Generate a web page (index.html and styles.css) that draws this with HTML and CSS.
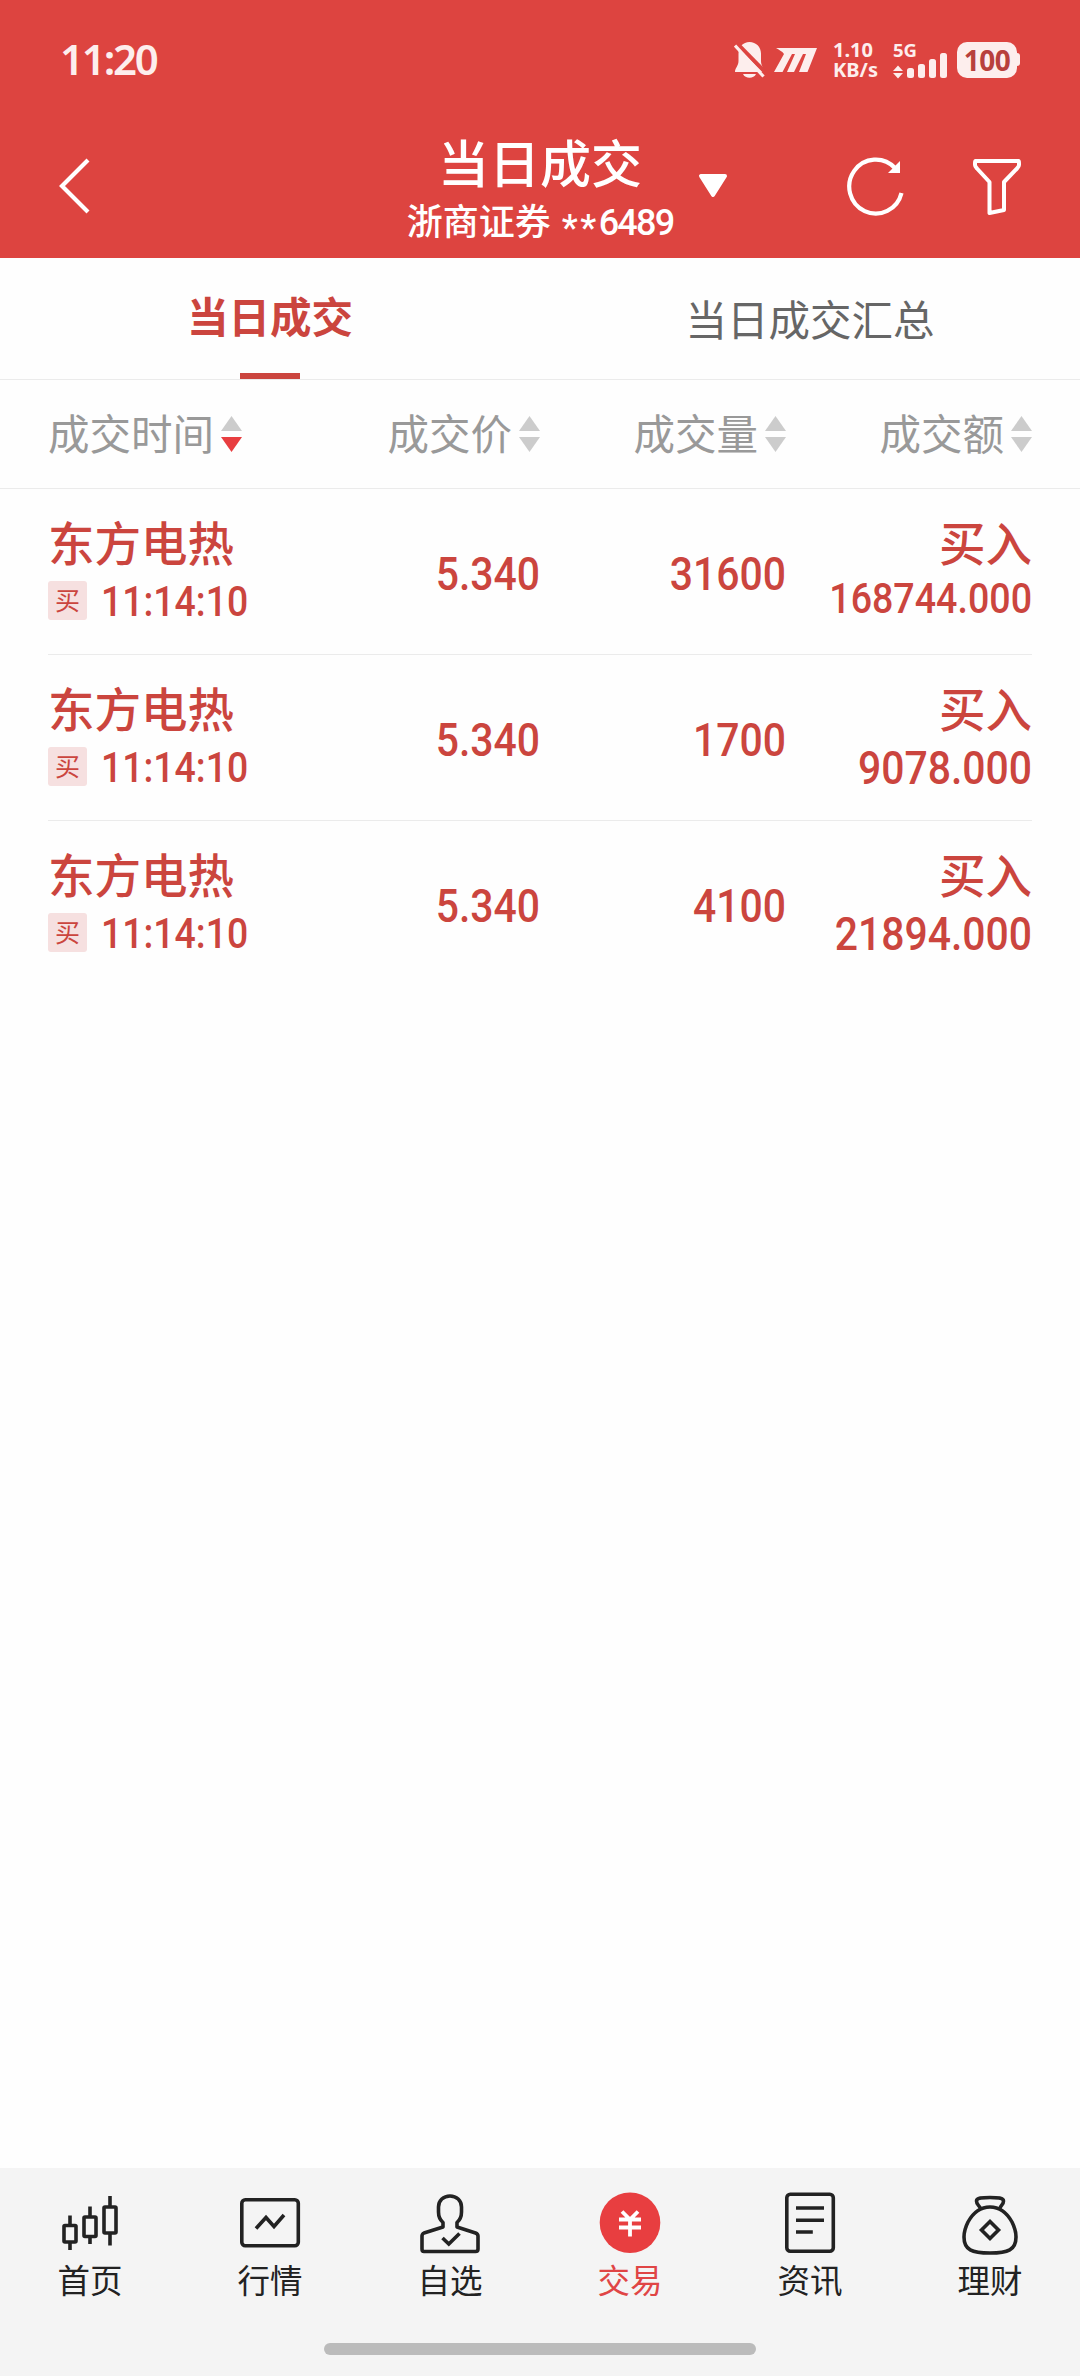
FILE: index.html
```html
<!DOCTYPE html>
<html lang="zh-CN">

<head>
    <meta charset="UTF-8">
    <meta name="viewport" content="width=device-width, initial-scale=1.0">
    <title>当日成交</title>
    <link rel="stylesheet" href="styles.css">
</head>

<body>
    <header class="header">
        <div class="status">
            <div class="clock">11:20</div>
            <div class="status-icons">
                <svg class="bell" width="32" height="38" viewBox="0 0 32 38">
                    <path d="M15.500 1C9 1 4.500 6 4.500 12.500V20C4.500 25 1 27 1 31H30C30 27 27 25 27 20V12.500C27 6 22 1 15.500 1Z" fill="#fdeeed"/>
                    <path d="M9 33H22C20 38 11 38 9 33Z" fill="#fdeeed"/>
                    <path d="M3.500 3L33 33" stroke="#dd4440" stroke-width="4"/>
                    <path d="M1 4.500L29.500 35.500" stroke="#fdeeed" stroke-width="3.200"/>
                </svg>
                <svg class="mlogo" width="44" height="26" viewBox="0 0 44 26">
                    <path d="M2 1H43L33.500 25H25L32 7H29L20 25H13L21 7H18L8.500 25H0L10 7C8 4 5 3 2 1Z" fill="#fdeeed"/>
                </svg>
                <div class="speed"><span>1.10</span><span>KB/s</span></div>
                <div class="signal">
                    <span class="net">5G</span>
                    <svg width="56" height="26" viewBox="0 0 56 26" fill="#fdeeed">
                        <path d="M0 18L5 12.500L10 18ZM0 20H10L5 25.500Z"/>
                        <rect x="14" y="15" width="7" height="10" rx="2.500"/>
                        <rect x="25" y="11" width="7" height="14" rx="2.500"/>
                        <rect x="36" y="6" width="7" height="19" rx="2.500"/>
                        <rect x="47" y="0" width="7" height="25" rx="2.500"/>
                    </svg>
                </div>
                <div class="battery">100</div>
                <div class="battery-tip"></div>
            </div>
        </div>
        <div class="navbar">
            <svg class="back" width="34" height="60" viewBox="0 0 34 60">
                <path d="M31 4L5 30L31 56" fill="none" stroke="#fff" stroke-width="4.200"/>
            </svg>
            <div class="heading">
                <h1>当日成交</h1>
                <p>浙商证券 <span class="stars">**</span><span class="acct">6489</span></p>
            </div>
            <svg class="caret" width="32" height="26" viewBox="0 0 32 26">
                <path d="M4 3H28L16 22Z" fill="#fff" stroke="#fff" stroke-width="4" stroke-linejoin="round"/>
            </svg>
            <svg class="refresh" width="60" height="62" viewBox="0 0 60 62">
                <path d="M55.500 38A26.500 27 0 1 1 49 13" fill="none" stroke="#fff" stroke-width="4.200"/>
                <path d="M54 6V18H42Z" fill="#fff"/>
            </svg>
            <svg class="filter" width="52" height="58" viewBox="0 0 52 58">
                <path d="M4.500 4H47.500Q48 4 48 6V8Q48 9.500 46 11.500L33 25V53L18.500 56V25L6 11.500Q4 9.500 4 8V6Q4 4 4.500 4Z" fill="none" stroke="#fff" stroke-width="4" stroke-linejoin="round"/>
            </svg>
        </div>
    </header>

    <div class="tabs">
        <div class="tab active">当日成交</div>
        <div class="tab">当日成交汇总</div>
    </div>

    <div class="row thead">
        <div class="th first">成交时间<i class="sort desc"></i></div>
        <div class="th">成交价<i class="sort"></i></div>
        <div class="th">成交量<i class="sort"></i></div>
        <div class="th">成交额<i class="sort"></i></div>
    </div>

    <main class="list">
        <div class="row deal">
            <div class="stock">
                <div class="name">东方电热</div>
                <div class="time"><span class="tag">买</span><span class="num small">11:14:10</span></div>
            </div>
            <div class="num">5.340</div>
            <div class="num">31600</div>
            <div class="amount">
                <div class="name">买入</div>
                <div class="num fit">168744.000</div>
            </div>
        </div>
        <div class="row deal">
            <div class="stock">
                <div class="name">东方电热</div>
                <div class="time"><span class="tag">买</span><span class="num small">11:14:10</span></div>
            </div>
            <div class="num">5.340</div>
            <div class="num">1700</div>
            <div class="amount">
                <div class="name">买入</div>
                <div class="num">9078.000</div>
            </div>
        </div>
        <div class="row deal">
            <div class="stock">
                <div class="name">东方电热</div>
                <div class="time"><span class="tag">买</span><span class="num small">11:14:10</span></div>
            </div>
            <div class="num">5.340</div>
            <div class="num">4100</div>
            <div class="amount">
                <div class="name">买入</div>
                <div class="num">21894.000</div>
            </div>
        </div>
    </main>

    <footer class="footer">
        <nav class="tabbar">
            <div class="item">
                <svg class="icon" viewBox="0 0 72 66">
                    <rect x="10" y="35.500" width="12" height="16.500" rx="1"/>
                    <rect x="30" y="27" width="12" height="19.500" rx="1"/>
                    <rect x="50" y="17" width="12" height="26" rx="1"/>
                    <path d="M16 25.500V35M16 53V60M36 16.500V26M36 48V54M56 6V16M56 44V55.500"/>
                </svg>
                <span>首页</span>
            </div>
            <div class="item">
                <svg class="icon" viewBox="0 0 72 66">
                    <rect x="7.800" y="9.800" width="56.500" height="46" rx="3.500"/>
                    <path d="M22 38.500L32 27.500L40 36.500L50 25"/>
                </svg>
                <span>行情</span>
            </div>
            <div class="item">
                <svg class="icon" viewBox="0 0 72 66">
                    <path d="M29 37V32.500C25.500 29.500 24.500 27 24.500 22V17C24.500 10.500 29.500 6 36 6S47.500 10.500 47.500 17V22C47.500 27 46.500 29.500 43 32.500V37L61.500 43Q64 44 64 46V59Q64 61.500 61.500 61.500H10Q8 61.500 8 59V46Q8 44 10 43Z" stroke-linejoin="round"/>
                    <path d="M28.500 48L34.800 54L45.500 43.500"/>
                </svg>
                <span>自选</span>
            </div>
            <div class="item active">
                <svg class="icon" viewBox="0 0 72 66">
                    <circle cx="36" cy="32.700" r="30.300" fill="#e83e40" stroke="none"/>
                    <path d="M28 21.500L36 29.500L44 21.500M25 29.500H47M25 37.500H47M36 29V46.500" stroke="#fff" stroke-width="3.800"/>
                </svg>
                <span>交易</span>
            </div>
            <div class="item">
                <svg class="icon" viewBox="0 0 72 66">
                    <rect x="12.800" y="4.200" width="46.500" height="57" rx="3.500"/>
                    <path d="M22 18H50M22 30.300H50M22 42H38.800"/>
                </svg>
                <span>资讯</span>
            </div>
            <div class="item">
                <svg class="icon" viewBox="0 0 72 66">
                    <path d="M36 17C46 17 53 23 58 32C61 38 62 43 62 47C62 60 54 63 36 63S10 60 10 47C10 43 11 38 14 32C19 23 26 17 36 17Z"/>
                    <path d="M27 19.500C25.500 15 22.500 15 22.500 11C22.500 8 28 7.500 36 7.500S49.500 8 49.500 11C49.500 15 46.500 15 45.500 19.500"/>
                    <path d="M36 31.500L44.500 40L36 48.500L27.500 40Z"/>
                </svg>
                <span>理财</span>
            </div>
        </nav>
        <div class="home-bar"></div>
    </footer>
</body>

</html>
```

FILE: styles.css
```css
* {
    margin: 0;
    padding: 0;
    box-sizing: border-box;
}

body {
    display: flex;
    flex-direction: column;
    height: 2376px;
    background: #fefefe;
    font-family: 'Noto Sans CJK SC', sans-serif;
}

svg {
    display: block;
    flex: none;
}

/* Red header */
.header {
    height: 258px;
    background: #dd4440;
    color: #fff;
}

.status {
    display: flex;
    justify-content: space-between;
    height: 120px;
    padding: 0 60px;
    color: #fdeeed;
    font-family: 'Noto Sans', sans-serif;
    font-weight: 700;
}

.clock {
    padding-top: 29px;
    font-size: 42px;
    font-weight: 600;
    line-height: 60px;
    letter-spacing: -2.2px;
}

.status-icons {
    display: flex;
    align-items: flex-start;
    padding-top: 41px;
}

.mlogo {
    margin: 6px 15px 0 8px;
}

.speed {
    display: flex;
    flex-direction: column;
    width: 60px;
    margin-top: -1px;
    font-size: 20px;
    line-height: 20px;
}

.signal {
    width: 64px;
}

.signal svg {
    margin-top: -5px;
}

.net {
    display: block;
    height: 17px;
    font-size: 18.500px;
    line-height: 17px;
}

.battery {
    width: 60px;
    height: 36px;
    margin-top: 1px;
    border-radius: 10px;
    background: #fdeeed;
    color: #b8403c;
    font-size: 28px;
    line-height: 36px;
    letter-spacing: -0.500px;
    text-align: center;
}

.battery-tip {
    width: 3px;
    height: 13px;
    margin-top: 12px;
    border-radius: 0 3px 3px 0;
    background: #fdeeed;
}

.navbar {
    display: flex;
    height: 138px;
    padding-left: 57px;
}

.back {
    margin-top: 36px;
}

.heading {
    display: flex;
    flex-direction: column;
    align-items: center;
    width: 266px;
    margin-left: 316px;
    white-space: nowrap;
}

.heading h1 {
    padding-top: 10px;
    font-size: 51px;
    font-weight: 500;
    line-height: 62px;
}

.heading p {
    font-size: 36px;
    font-weight: 500;
    line-height: 54px;
}

.stars {
    display: inline-block;
    margin-left: 3px;
    font-family: 'Roboto', sans-serif;
    letter-spacing: 2.500px;
    transform: translateY(5px);
}

.acct {
    font-family: 'Roboto', sans-serif;
    letter-spacing: -1.800px;
}

.caret {
    margin: 53px 0 0 24px;
}

.refresh {
    margin: 35px 0 0 117px;
}

.filter {
    margin: 37px 0 0 65px;
}

/* Tabs */
.tabs {
    display: flex;
    height: 122px;
    border-bottom: 1px solid #ebebeb;
}

.tab {
    display: flex;
    flex-direction: column;
    align-items: center;
    flex: 1;
    padding-top: 29px;
    color: #666;
    font-size: 41.500px;
    line-height: 62px;
}

.tab.active {
    padding-top: 26px;
    color: #cb453e;
    font-weight: 700;
}

.tab.active::after {
    content: "";
    width: 60px;
    height: 6px;
    margin-top: auto;
    background: #cb453e;
}

/* Table */
.row {
    display: grid;
    grid-template-columns: 246px 246px 246px 246px;
    padding: 0 48px;
}

.thead {
    height: 109px;
    border-bottom: 1px solid #ebebeb;
    color: #999;
    font-size: 41.500px;
    line-height: 104px;
}

.th {
    display: flex;
    justify-content: flex-end;
}

.th.first {
    justify-content: flex-start;
}

.sort {
    display: flex;
    flex-direction: column;
    gap: 6px;
    margin: 36px 0 0 7px;
}

.sort::before,
.sort::after {
    content: "";
    width: 21px;
    height: 15px;
    background: #ccc;
}

.sort::before {
    clip-path: polygon(50% 0, 100% 100%, 0 100%);
}

.sort::after {
    clip-path: polygon(0 0, 100% 0, 50% 100%);
}

.sort.desc::after {
    background: #e83e40;
}

.list {
    flex: 1;
    color: #cb453e;
}

.deal {
    height: 166px;
    margin: 0 48px;
    padding: 0;
    border-bottom: 1px solid #ebebeb;
}

.deal:last-child {
    border-bottom: none;
}

.name {
    height: 60px;
    margin-top: 22px;
    font-size: 46.500px;
    font-weight: 500;
    line-height: 60px;
}

.num {
    font-family: 'Roboto', sans-serif;
    font-size: 47px;
    font-weight: 500;
    line-height: 60px;
    text-align: right;
    transform: scaleX(0.87);
    transform-origin: right;
}

.deal > .num {
    padding-top: 55px;
}

.time {
    display: flex;
    align-items: center;
    gap: 14px;
    height: 48px;
    margin-top: 5px;
}

.tag {
    width: 39px;
    height: 39px;
    border-radius: 3px;
    background: #f6e0e0;
    font-size: 25px;
    line-height: 36px;
    text-align: center;
}

.num.small {
    padding-top: 3px;
    font-size: 42px;
    transform: scaleX(0.89);
    transform-origin: left;
}

.amount {
    text-align: right;
}

.amount .num {
    margin-top: 1px;
}

.num.fit {
    font-size: 42px;
    line-height: 54px;
    transform: scaleX(0.895);
}

/* Bottom navigation */
.footer {
    height: 208px;
    background: #f4f4f4;
}

.tabbar {
    display: flex;
    height: 175px;
    padding-top: 22px;
}

.item {
    display: flex;
    flex-direction: column;
    align-items: center;
    flex: 1;
    color: #222;
    font-size: 32.500px;
    line-height: 46px;
}

.item.active {
    color: #e04545;
}

.icon {
    width: 72px;
    height: 66px;
    fill: none;
    stroke: #222;
    stroke-width: 3.600;
}

.home-bar {
    width: 432px;
    height: 12px;
    margin: 0 auto;
    border-radius: 6px;
    background: #bbb;
}
```
